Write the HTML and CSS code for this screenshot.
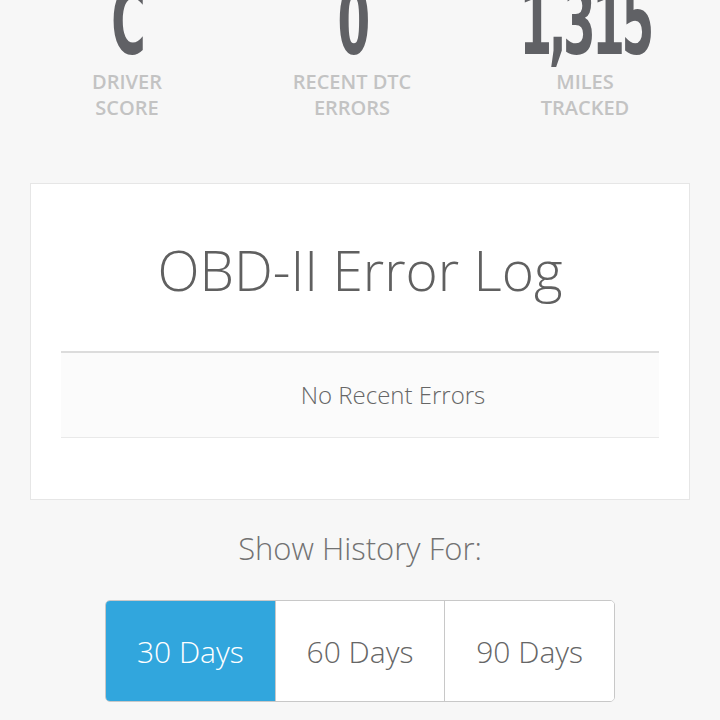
FILE: index.html
```html
<!DOCTYPE html>
<html lang="en">
  <head>
    <meta charset="UTF-8" />
    <meta name="viewport" content="width=device-width, initial-scale=1" />
    <title>Vehicle Dashboard</title>
    <link rel="stylesheet" href="styles.css">
  </head>
  <body>
    <section class="stats">
      <div class="stat">
        <span class="stat-value">C</span>
        <span class="stat-label">Driver<br>Score</span>
      </div>
      <div class="stat">
        <span class="stat-value">0</span>
        <span class="stat-label">Recent DTC<br>Errors</span>
      </div>
      <div class="stat">
        <span class="stat-value">1,315</span>
        <span class="stat-label">Miles<br>Tracked</span>
      </div>
    </section>

    <main class="card">
      <h1>OBD-II Error Log</h1>
      <table class="error-table">
        <tbody>
          <tr>
            <td class="empty">No Recent Errors</td>
          </tr>
        </tbody>
      </table>
    </main>

    <section class="history">
      <p class="history-title">Show History For:</p>
      <div class="range-group">
        <button class="range active">30 Days</button>
        <button class="range">60 Days</button>
        <button class="range">90 Days</button>
      </div>
    </section>
  </body>
</html>
```

FILE: styles.css
```css
* {
  box-sizing: border-box;
  margin: 0;
  padding: 0;
}

body {
  font-family: 'Open Sans', sans-serif;
  background-color: #f7f7f7;
  color: #666;
  overflow: hidden;
}

/* top summary numbers */
.stats {
  display: grid;
  grid-template-columns: 254px 196px 270px;
  margin-top: -11px;
}

.stat {
  display: flex;
  flex-direction: column;
  align-items: center;
}

.stat-value {
  display: inline-block;
  font-family: 'DejaVu Sans Condensed', sans-serif;
  font-weight: 700;
  font-size: 90px;
  line-height: 0.75;
  color: #606165;
  transform: scaleX(0.58);
  letter-spacing: -6px;
}

.stat-label {
  margin-top: 12px;
  font-size: 20px;
  font-weight: 600;
  line-height: 26px;
  text-transform: uppercase;
  text-align: center;
  color: #c3c3c3;
}

/* error log card */
.card {
  margin: 62px 30px 0;
  background: #fff;
  border: 1px solid #e6e6e6;
  padding: 46px 30px 61px;
}

.card h1 {
  font-weight: 300;
  font-size: 55px;
  line-height: 80px;
  text-align: center;
  color: #606060;
  margin-bottom: 41px;
}

.error-table {
  width: 100%;
  border-collapse: collapse;
  border-top: 2px solid #dcdcdc;
  border-bottom: 1px solid #e9e9e9;
  background: #fbfbfb;
}

.empty {
  height: 86px;
  padding-left: 66px;
  text-align: center;
  font-size: 24px;
  font-weight: 300;
  color: #666;
}

/* history range selector */
.history {
  display: flex;
  flex-direction: column;
  align-items: center;
  margin-top: 26px;
}

.history-title {
  font-size: 31px;
  font-weight: 300;
  line-height: 44px;
  color: #727272;
}

.range-group {
  display: flex;
  margin-top: 30px;
  width: 510px;
  border: 1px solid #c8c8c8;
  border-radius: 5px;
  overflow: hidden;
}

.range {
  flex: 1;
  height: 100px;
  border: none;
  border-left: 1px solid #c8c8c8;
  background: #fff;
  font-family: 'Open Sans', sans-serif;
  font-size: 30px;
  font-weight: 300;
  color: #666;
}

.range:first-child {
  border-left: none;
}

.range.active {
  background: #31a6dd;
  color: #fff;
}
```
